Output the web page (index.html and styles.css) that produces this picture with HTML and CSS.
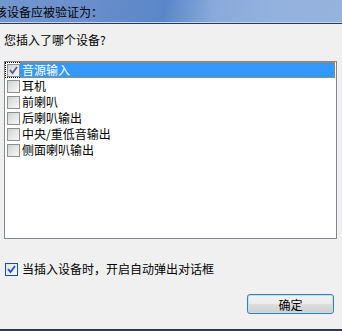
FILE: index.html
```html
<!DOCTYPE html>
<html lang="zh-CN">
<head>
    <meta charset="UTF-8">
    <title>设备验证</title>
    <link rel="stylesheet" href="styles.css">
</head>
<body>
    <div class="titlebar">
        <span class="title">该设备应被验证为：</span>
    </div>
    <div class="content">
        <div class="question">您插入了哪个设备?</div>
        <div class="listbox">
            <div class="row selected">
                <span class="box-cell"><span class="box checked">
                    <svg width="11" height="11" viewBox="0 0 11 11"><polyline points="2,5 4.5,8 9,2" fill="none" stroke="#4d5f8f" stroke-width="1.8"/></svg>
                </span></span>
                <span class="label">音源输入</span>
            </div>
            <div class="row">
                <span class="box-cell"><span class="box"></span></span>
                <span class="label">耳机</span>
            </div>
            <div class="row">
                <span class="box-cell"><span class="box"></span></span>
                <span class="label">前喇叭</span>
            </div>
            <div class="row">
                <span class="box-cell"><span class="box"></span></span>
                <span class="label">后喇叭输出</span>
            </div>
            <div class="row">
                <span class="box-cell"><span class="box"></span></span>
                <span class="label">中央/重低音输出</span>
            </div>
            <div class="row">
                <span class="box-cell"><span class="box"></span></span>
                <span class="label">侧面喇叭输出</span>
            </div>
        </div>
        <label class="auto-popup">
            <span class="box checked blue">
                <svg width="11" height="11" viewBox="0 0 11 11"><polyline points="2,5 4.5,8 9,2" fill="none" stroke="#2252c4" stroke-width="1.8"/></svg>
            </span>
            <span>当插入设备时，开启自动弹出对话框</span>
        </label>
        <div class="actions">
            <button class="ok-btn">确定</button>
        </div>
    </div>
    <div class="bottom-line"></div>
</body>
</html>
```

FILE: styles.css
```css
html, body {
    margin: 0;
    padding: 0;
}
body {
    width: 342px;
    height: 331px;
    overflow: hidden;
    background: #f0f0f0;
    font-family: "Noto Sans CJK SC", "DejaVu Sans", sans-serif;
    font-size: 12px;
    color: #000;
    display: flex;
    flex-direction: column;
}
.titlebar {
    height: 23px;
    border-bottom: 1px solid #2e3a50;
    box-shadow: inset 0 -1px #c6d5ec;
    background: linear-gradient(100deg, #7397cf 0%, #6a8fcb 25%, #5a86c8 48%, #89a9da 62%, #94b2de 80%, #96b3de 100%);
    display: flex;
    align-items: center;
    overflow: hidden;
}
.title {
    margin-left: -5px;
    line-height: 20px;
    color: #000;
}
.content {
    padding: 0 6px 0 4px;
    display: flex;
    flex-direction: column;
}
.question {
    margin-top: 8px;
    line-height: 16px;
}
.listbox {
    margin-top: 13px;
    width: 331px;
    height: 176px;
    border: 1px solid #828790;
    background: #fff;
}
.row {
    display: flex;
    height: 16px;
    margin-left: 0;
    width: 330px;
}
.box-cell {
    width: 15px;
    height: 16px;
    display: flex;
    align-items: center;
    justify-content: flex-end;
    box-sizing: border-box;
}
.box {
    width: 11px;
    height: 11px;
    border: 1px solid #8e8f8f;
    background: linear-gradient(135deg, #d0d0d0 0%, #e6e6e6 50%, #f7f7f7 100%);
    display: flex;
    align-items: center;
    justify-content: center;
    flex: none;
}
.box svg {
    display: block;
}
.box.blue {
    border-color: #1c5180;
    background: linear-gradient(135deg, #dfe6ef 0%, #f4f7fa 100%);
}
.label {
    flex: 1;
    line-height: 16px;
    padding-left: 2px;
    box-sizing: border-box;
}
.row.selected .box-cell {
    border: 1px dotted #000;
    border-right: none;
}
.row.selected .label {
    background: #3399ff;
    color: #fff;
    border: 1px dotted #f07c00;
    border-left: none;
    line-height: 14px;
}
.auto-popup {
    margin-top: 22px;
    display: flex;
    align-items: center;
    gap: 4px;
    line-height: 16px;
    padding-left: 1px;
}
.actions {
    display: flex;
    justify-content: flex-end;
    margin-top: 17px;
}
.ok-btn {
    width: 87px;
    height: 20px;
    margin-right: 2px;
    padding: 0;
    border: 1px solid #3c7fb1;
    border-radius: 3px;
    box-shadow: inset 0 0 0 1px #b8e2f6;
    background: linear-gradient(#f2f2f2 0%, #ebebeb 50%, #dddddd 51%, #cfcfcf 100%);
    font-family: inherit;
    font-size: 12px;
    color: #000;
}
.bottom-line {
    margin-top: auto;
    height: 2px;
    background: #2e3a50;
}
```
